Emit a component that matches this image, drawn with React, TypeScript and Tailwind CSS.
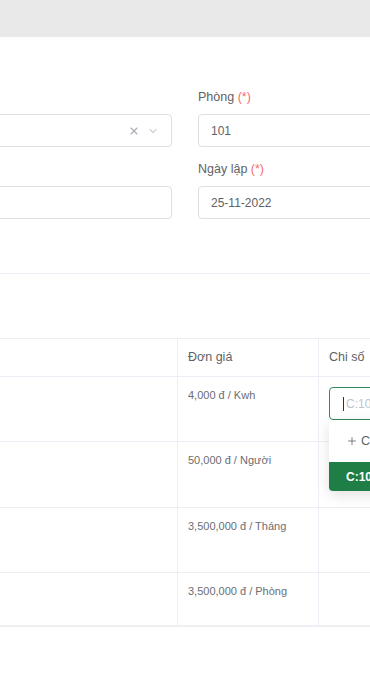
import { ChevronDown, Plus, X } from "lucide-react";

interface Row {
  price: string;
  height: string;
  active?: boolean;
}

const rows: Row[] = [
  { price: "4,000 đ / Kwh", height: "h-[65px]", active: true },
  { price: "50,000 đ / Người", height: "h-[66px]" },
  { price: "3,500,000 đ / Tháng", height: "h-[65px]" },
  { price: "3,500,000 đ / Phòng", height: "h-[54px]" },
];

const Label = ({ text }: { text?: string }) => (
  <div className="mb-[8px] h-[18px] text-[12.5px] leading-[18px] text-[#606266]">
    {text && (
      <>
        {text} <span className="text-[#f56c6c]">(*)</span>
      </>
    )}
  </div>
);

const Field = ({ value, select }: { value?: string; select?: boolean }) => (
  <div className="flex h-[33px] items-center rounded-[4px] border border-[#dcdfe6] bg-white px-[12px] text-[12px] text-[#606266]">
    <span className="flex-1">{value}</span>
    {select && (
      <div className="flex items-center gap-[7px] text-[#a8abb2]">
        <X size={12} strokeWidth={2.2} />
        <ChevronDown size={12} strokeWidth={2} />
      </div>
    )}
  </div>
);

const ReadingCell = () => (
  <div className="relative pt-[10px] pl-[10px]">
    <div className="flex h-[33px] w-[80px] items-center rounded-[4px] border border-[#2e8b57] bg-white pl-[13px] text-[12px]">
      <span className="h-[14px] w-px bg-[#303133]" />
      <span className="pl-[2px] text-[#c0c4cc]">C:100</span>
    </div>
    <div className="absolute left-[10px] top-[43px] z-10 w-[80px] rounded-b-[4px] bg-white shadow-[0_4px_14px_rgba(0,0,0,0.12)]">
      <div className="flex h-[42px] items-center gap-[3px] pl-[17px] text-[12.5px] text-[#606266]">
        <Plus size={12} strokeWidth={1.6} />
        <span>Chỉ số</span>
      </div>
      <div className="flex h-[29px] items-center rounded-b-[4px] bg-[#1f7d46] pl-[17px] text-[12px] font-bold text-white">
        C:100
      </div>
    </div>
  </div>
);

export default function App() {
  return (
    <div className="h-[700px] w-[370px] overflow-hidden bg-white font-['Liberation_Sans',Arial,sans-serif]">
      <div className="h-[37px] bg-[#e9e9e9]" />

      <div className="-ml-[16px] grid w-[420px] grid-cols-[188px_206px] gap-x-[26px] pt-[51px]">
        <div>
          <Label />
          <Field select />
        </div>
        <div>
          <Label text="Phòng" />
          <Field value="101" />
        </div>
        <div className="pt-[13px]">
          <Label />
          <Field />
        </div>
        <div className="pt-[13px]">
          <Label text="Ngày lập" />
          <Field value="25-11-2022" />
        </div>
      </div>

      <div className="mt-[54px] border-t border-[#ebeef5]" />

      <div className="mt-[64px] border-t border-[#ebeef5]">
        <div className="grid h-[38px] grid-cols-[178px_141px_1fr] border-b border-[#ebeef5] text-[12.5px] text-[#606266]">
          <div className="border-r border-[#ebeef5]" />
          <div className="flex items-center border-r border-[#ebeef5] pl-[10px]">Đơn giá</div>
          <div className="flex items-center pl-[10px]">Chi số</div>
        </div>
        {rows.map((row, i) => (
          <div
            key={i}
            className={`grid grid-cols-[178px_141px_1fr] ${row.height} ${
              i === rows.length - 1 ? "border-b-2 border-[#eeeff3]" : "border-b border-[#ebeef5]"
            }`}
          >
            <div className="border-r border-[#ebeef5]" />
            <div className="border-r border-[#ebeef5] pl-[10px] pt-[10px] text-[11px] text-[#6b6d73]">
              {row.price}
            </div>
            <div>{row.active && <ReadingCell />}</div>
          </div>
        ))}
      </div>
    </div>
  );
}
